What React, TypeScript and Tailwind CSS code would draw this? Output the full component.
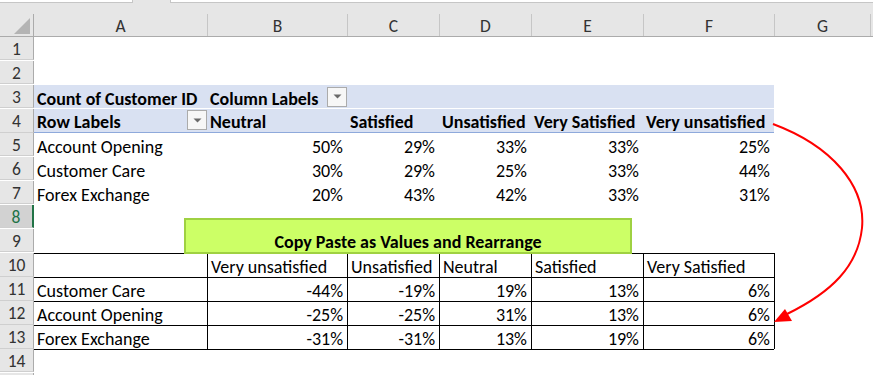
import React from "react";

const FONT = "font-[family-name:Carlito,Lato,sans-serif]";

type Cell = {
  text?: string;
  bold?: boolean;
  right?: boolean;
  drop?: boolean;
};

type Row = {
  n: number;
  cells: Cell[]; // A..F
  pivot?: boolean;
  pivotBottom?: boolean;
  table?: boolean; // bordered output table row
  tableTopOnly?: boolean;
  selected?: boolean;
};

const COLS = ["A", "B", "C", "D", "E", "F", "G", ""];
const GRID = "grid grid-cols-[34px_173px_140px_92px_92px_112px_131px_96px_1fr]";

const empty = (): Cell[] => [{}, {}, {}, {}, {}, {}];

const rows: Row[] = [
  { n: 1, cells: empty() },
  { n: 2, cells: empty() },
  {
    n: 3,
    pivot: true,
    cells: [
      { text: "Count of Customer ID", bold: true },
      { text: "Column Labels", bold: true, drop: true },
      {},
      {},
      {},
      {},
    ],
  },
  {
    n: 4,
    pivot: true,
    pivotBottom: true,
    cells: [
      { text: "Row Labels", bold: true, drop: true },
      { text: "Neutral", bold: true },
      { text: "Satisfied", bold: true },
      { text: "Unsatisfied", bold: true },
      { text: "Very Satisfied", bold: true },
      { text: "Very unsatisfied", bold: true },
    ],
  },
  {
    n: 5,
    cells: [
      { text: "Account Opening" },
      { text: "50%", right: true },
      { text: "29%", right: true },
      { text: "33%", right: true },
      { text: "33%", right: true },
      { text: "25%", right: true },
    ],
  },
  {
    n: 6,
    cells: [
      { text: "Customer Care" },
      { text: "30%", right: true },
      { text: "29%", right: true },
      { text: "25%", right: true },
      { text: "33%", right: true },
      { text: "44%", right: true },
    ],
  },
  {
    n: 7,
    cells: [
      { text: "Forex Exchange" },
      { text: "20%", right: true },
      { text: "43%", right: true },
      { text: "42%", right: true },
      { text: "33%", right: true },
      { text: "31%", right: true },
    ],
  },
  { n: 8, cells: empty(), selected: true },
  { n: 9, cells: empty() },
  {
    n: 10,
    table: true,
    cells: [
      {},
      { text: "Very unsatisfied" },
      { text: "Unsatisfied" },
      { text: "Neutral" },
      { text: "Satisfied" },
      { text: "Very Satisfied" },
    ],
  },
  {
    n: 11,
    table: true,
    cells: [
      { text: "Customer Care" },
      { text: "-44%", right: true },
      { text: "-19%", right: true },
      { text: "19%", right: true },
      { text: "13%", right: true },
      { text: "6%", right: true },
    ],
  },
  {
    n: 12,
    table: true,
    cells: [
      { text: "Account Opening" },
      { text: "-25%", right: true },
      { text: "-25%", right: true },
      { text: "31%", right: true },
      { text: "13%", right: true },
      { text: "6%", right: true },
    ],
  },
  {
    n: 13,
    table: true,
    cells: [
      { text: "Forex Exchange" },
      { text: "-31%", right: true },
      { text: "-31%", right: true },
      { text: "13%", right: true },
      { text: "19%", right: true },
      { text: "6%", right: true },
    ],
  },
  { n: 14, cells: empty(), tableTopOnly: true },
];

function DropButton() {
  return (
    <div className="w-[20px] h-[20px] shrink-0 border border-[#ababab] bg-[#f7f7f7] flex items-center justify-center">
      <svg width="9" height="5" viewBox="0 0 9 5">
        <path d="M0.5 0.5 L8.5 0.5 L4.5 4.5 Z" fill="#6a6a6a" />
      </svg>
    </div>
  );
}

function SheetRow({ row }: { row: Row }) {
  const head = row.selected
    ? "bg-[#d2d2d2] text-[#217346] border-r-2 border-r-[#217346]"
    : "bg-[#e6e6e6] text-[#333] border-r border-r-[#ababab]";
  return (
    <div className={`${GRID} h-[24px]`}>
      <div
        className={`${head} border-b border-b-[#cfcfcf] flex items-center justify-center text-[17.5px] leading-none pt-[3px]`}
      >
        {row.n}
      </div>
      {row.cells.map((c, i) => {
        const bg = row.pivot ? "bg-[#d9e1f2]" : "bg-white";
        const pb = row.pivotBottom ? "border-b border-b-[#8ea9db]" : "";
        const tb =
          row.table || row.tableTopOnly ? "border-t border-t-black" : "";
        const lb = row.table && i > 0 ? "border-l border-l-black" : "";
        return (
          <div
            key={i}
            className={`${bg} ${pb} ${tb} ${lb} flex items-center ${
              c.right ? "justify-end pr-[4px]" : "justify-between pl-[3px]"
            } ${c.bold ? "font-bold" : ""} text-[18px] leading-none whitespace-nowrap text-black overflow-visible`}
          >
            <span className="pt-[4px]">{c.text}</span>
            {c.drop && <DropButton />}
          </div>
        );
      })}
      <div className={`bg-white ${row.table ? "border-l border-l-black" : ""}`} />
      <div className="bg-white" />
      <div className="bg-white" />
    </div>
  );
}

export default function App() {
  return (
    <div
      className={`relative w-[873px] h-[375px] overflow-hidden bg-white ${FONT}`}
    >
      {/* name box / formula bar edges */}
      <div className="h-[14px] bg-[#e6e6e6]">
        <div className="flex h-[3px]">
          <div className="w-[133px] bg-white border-b border-r border-[#c6c6c6]" />
          <div className="w-[37px]" />
          <div className="flex-1 bg-white border-b border-l border-[#c6c6c6]" />
        </div>
      </div>

      {/* column headers */}
      <div className={`${GRID} h-[23px] bg-[#e6e6e6] border-b border-b-[#ababab]`}>
        <div className="relative border-r border-r-[#ababab]">
          <svg
            className="absolute left-[14px] top-[4px]"
            width="16"
            height="16"
            viewBox="0 0 16 16"
          >
            <path d="M16 0 L16 16 L0 16 Z" fill="#b4b4b4" />
          </svg>
        </div>
        {COLS.map((c, i) => (
          <div
            key={i}
            className={`${
              i > 0 ? "border-l border-l-[#c6c6c6]" : ""
            } flex items-center justify-center text-[17.5px] leading-none text-[#333] pt-[3px]`}
          >
            {c}
          </div>
        ))}
      </div>

      {rows.map((r) => (
        <SheetRow key={r.n} row={r} />
      ))}

      {/* next row header edge */}
      <div className={`${GRID} h-[4px]`}>
        <div className="bg-[#e6e6e6] border-r border-r-[#ababab]" />
      </div>

      {/* text box shape above the output table */}
      <div className="absolute left-[184px] top-[218px] w-[448px] h-[36px] bg-[#ccff66] border-2 border-[#9fd142] flex items-end justify-center pb-[1px]">
        <span className="font-bold text-[18px] leading-none text-black">
          Copy Paste as Values and Rearrange
        </span>
      </div>

      {/* red connector arrow */}
      <svg
        className="absolute left-0 top-0 pointer-events-none"
        width="873"
        height="375"
        viewBox="0 0 873 375"
      >
        <path
          d="M773 124 C 832 146, 866 186, 862 228 C 858 266, 832 292, 787 314"
          fill="none"
          stroke="#ff0000"
          strokeWidth="2"
        />
        <path d="M774 322 L785 309 L792 321 Z" fill="#ff0000" />
      </svg>
    </div>
  );
}
